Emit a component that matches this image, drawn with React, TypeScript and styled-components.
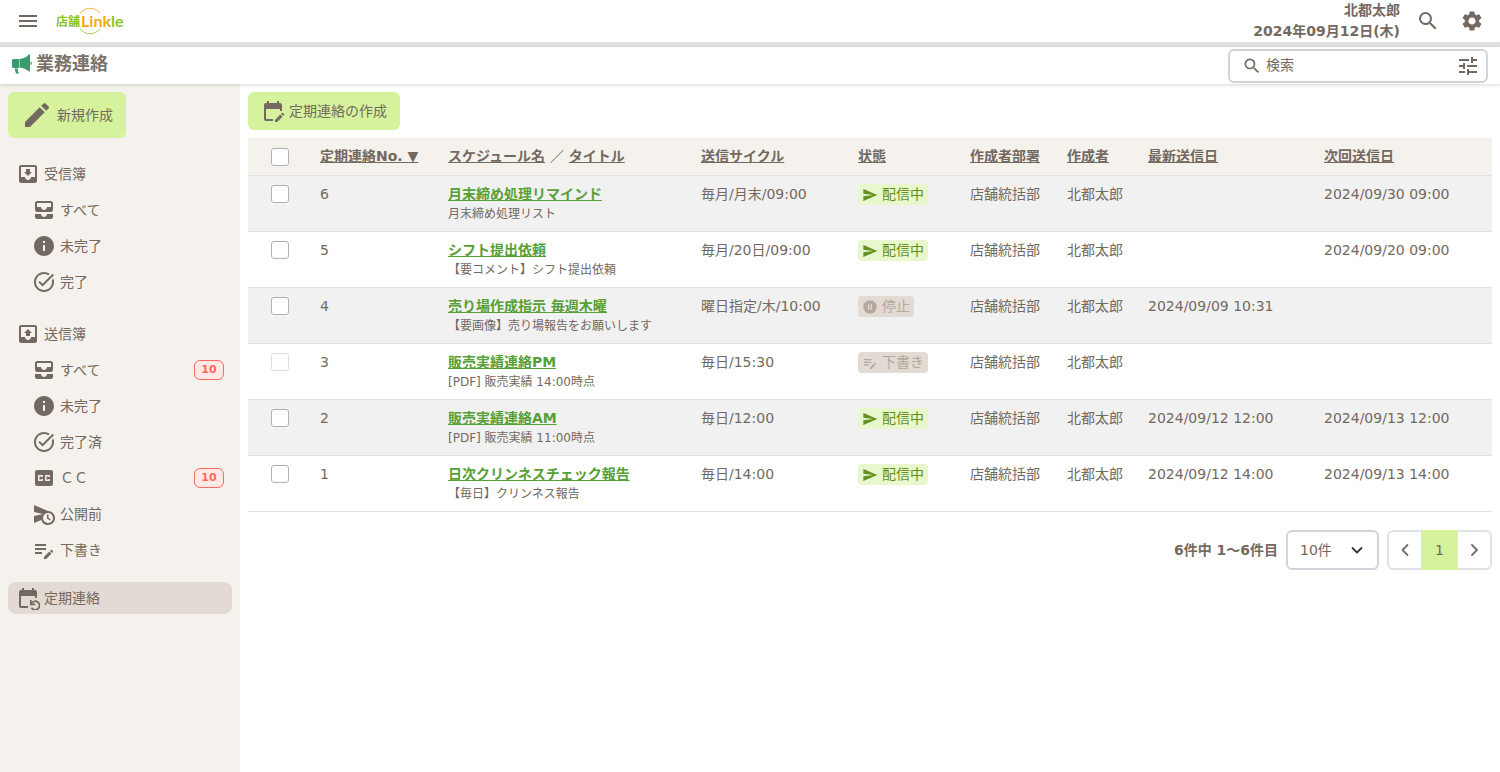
import React, { useState } from "react";
import styled, { createGlobalStyle, css } from "styled-components";
import {
  MdAllInbox,
  MdClosedCaption,
  MdEdit,
  MdEditCalendar,
  MdEditNote,
  MdInfo,
  MdMenu,
  MdPauseCircleFilled,
  MdScheduleSend,
  MdSearch,
  MdSend,
  MdSettings,
  MdTaskAlt,
  MdTune,
} from "react-icons/md";

const color = {
  text: "#736960",
  green: "#d6f29c",
  link: "#56a036",
  sand: "#f5f2ed",
  line: "#dee2e6",
  active: "#e2dad3",
};

const GlobalStyle = createGlobalStyle`
  *, *::before, *::after { box-sizing: border-box; }
  body {
    margin: 0;
    background: #fff;
    color: ${color.text};
    font-family: "DejaVu Sans", "Noto Sans CJK JP", sans-serif;
    font-size: 14px;
    line-height: 21px;
  }
  button, input, select { font: inherit; color: inherit; }
  a { color: inherit; }
`;

const Page = styled.div`
  display: flex;
  flex-direction: column;
  min-height: 100vh;
`;

const TopBar = styled.header`
  display: flex;
  align-items: center;
  height: 47px;
  padding: 0 16px;
  border-bottom: 5px solid #e0e0e0;
`;

const IconButton = styled.button`
  display: flex;
  padding: 0;
  border: 0;
  background: none;
  cursor: pointer;
  svg {
    width: 24px;
    height: 24px;
  }
`;

const LogoLink = styled.a`
  display: flex;
  margin-left: 14px;
`;

const UserInfo = styled.div`
  margin: 0 16px 0 auto;
  text-align: right;
  font-weight: 700;
`;

const TopActions = styled.div`
  display: flex;
  gap: 20px;
`;

const TitleBar = styled.div`
  position: relative;
  display: flex;
  align-items: center;
  justify-content: space-between;
  height: 37px;
  padding: 0 12px;
  box-shadow: 0 1px 4px rgba(0, 0, 0, 0.16);
`;

const PageTitle = styled.h1`
  display: flex;
  align-items: center;
  gap: 4px;
  margin: 0;
  padding-bottom: 4px;
  color: #7d7269;
  font-size: 18px;
  line-height: 24px;
`;

const SearchBox = styled.label`
  display: flex;
  align-items: center;
  gap: 4px;
  width: 260px;
  height: 34px;
  padding: 0 6px 0 12px;
  border: 2px solid #ced4da;
  border-radius: 6px;
  background: #fff;
  > svg {
    flex: none;
    width: 20px;
    height: 20px;
  }
`;

const SearchInput = styled.input`
  flex: 1;
  min-width: 0;
  padding: 0;
  border: 0;
  outline: 0;
  background: none;
  &::placeholder {
    color: ${color.text};
    opacity: 1;
  }
`;

const Body = styled.div`
  display: flex;
  flex: 1;
`;

const Sidebar = styled.nav`
  flex: none;
  width: 240px;
  padding: 8px;
  background: ${color.sand};
`;

const PrimaryButton = styled.button<{ $large?: boolean }>`
  display: flex;
  align-items: center;
  gap: 4px;
  height: ${(p) => (p.$large ? 46 : 38)}px;
  padding: 0 13px;
  border: 0;
  border-radius: 6px;
  background: ${color.green};
  cursor: pointer;
  svg {
    width: ${(p) => (p.$large ? 32 : 24)}px;
    height: ${(p) => (p.$large ? 32 : 24)}px;
  }
`;

const NavGroup = styled.ul`
  margin: 18px 0 0;
  padding: 0;
  list-style: none;
  & + & {
    margin-top: 16px;
  }
  & + &:last-child {
    margin-top: 14px;
  }
`;

const NavLink = styled.a<{ $child?: boolean; $active?: boolean }>`
  display: flex;
  align-items: center;
  gap: 4px;
  height: ${(p) => (p.$active ? 32 : 36)}px;
  padding: 0 8px 0 ${(p) => (p.$child ? 24 : 8)}px;
  border-radius: 8px;
  text-decoration: none;
  ${(p) =>
    p.$active &&
    css`
      background: ${color.active};
    `}
  svg {
    flex: none;
    width: 24px;
    height: 24px;
  }
`;

const Count = styled.span`
  margin-left: auto;
  width: 30px;
  border: 1px solid #fa6b5b;
  border-radius: 6px;
  background: #ffe8e6;
  color: #fa6b5b;
  font-size: 11px;
  font-weight: 700;
  line-height: 18px;
  text-align: center;
`;

const Main = styled.main`
  flex: 1;
  min-width: 0;
  padding: 8px;
`;

const Table = styled.table`
  width: 100%;
  margin-top: 8px;
  border-collapse: separate;
  border-spacing: 0;
  table-layout: fixed;
`;

const Col = styled.col<{ $w?: number }>`
  width: ${(p) => (p.$w ? `${p.$w}px` : "auto")};
`;

const Th = styled.th`
  height: 38px;
  padding: 0 8px;
  border-bottom: 1px solid ${color.line};
  background: ${color.sand};
  text-align: left;
  white-space: nowrap;
`;

const Tr = styled.tr`
  &:nth-child(odd) {
    background: #f1f1f1;
  }
`;

const Td = styled.td`
  padding: 8px;
  border-bottom: 1px solid ${color.line};
  vertical-align: top;
  white-space: nowrap;
`;

const SortButton = styled.button`
  padding: 0;
  border: 0;
  background: none;
  font-weight: 700;
  text-decoration: underline;
  cursor: pointer;
`;

const Checkbox = styled.input`
  appearance: none;
  display: block;
  width: 18px;
  height: 18px;
  margin: 1px auto 0;
  border: 1px solid #b1b1b1;
  border-radius: 3px;
  background: #fff;
  &:checked {
    background: ${color.link};
  }
  &:disabled {
    border-color: #dedede;
  }
  ${Th} & {
    margin-top: 0;
  }
`;

const ScheduleLink = styled.a`
  display: block;
  width: fit-content;
  color: ${color.link};
  font-weight: 700;
`;

const Subtitle = styled.div`
  font-size: 12px;
  line-height: 18px;
`;

const StatusTag = styled.span<{ $live: boolean }>`
  display: inline-flex;
  align-items: center;
  gap: 4px;
  height: 21px;
  padding: 0 4px;
  border-radius: 4px;
  vertical-align: top;
  background: ${(p) => (p.$live ? "#e8f8cc" : color.active)};
  color: ${(p) => (p.$live ? "#648f22" : "#b3a99e")};
  svg {
    width: 16px;
    height: 16px;
  }
`;

const Pager = styled.div`
  display: flex;
  align-items: center;
  justify-content: flex-end;
  gap: 8px;
  margin-top: 18px;
`;

const Total = styled.span`
  font-weight: 700;
`;

const SelectWrap = styled.div`
  display: grid;
  align-items: center;
  > * {
    grid-area: 1 / 1;
  }
  svg {
    justify-self: end;
    margin-right: 15px;
    pointer-events: none;
  }
`;

const PageSize = styled.select`
  appearance: none;
  width: 93px;
  height: 40px;
  padding: 0 12px;
  border: 2px solid #ced4da;
  border-radius: 6px;
  background: #fff;
`;

const PageNav = styled.nav`
  display: flex;
  border: 2px solid ${color.line};
  border-radius: 6px;
`;

const PageButton = styled.button<{ $current?: boolean }>`
  display: flex;
  align-items: center;
  justify-content: center;
  width: ${(p) => (p.$current ? 37 : 32)}px;
  height: ${(p) => (p.$current ? 40 : 36)}px;
  margin: ${(p) => (p.$current ? "-2px 0" : "0")};
  padding: 0;
  border: 0;
  background: ${(p) => (p.$current ? color.green : "none")};
  cursor: pointer;
`;

const Logo = () => (
  <svg width="76" height="30" viewBox="0 0 76 30" role="img" aria-label="店舗Linkle">
    <defs>
      <linearGradient id="brand" gradientUnits="userSpaceOnUse" x1="27" x2="71" y1="0" y2="0">
        <stop offset="0.55" stopColor="#f8a912" />
        <stop offset="0.72" stopColor="#8cc51f" />
      </linearGradient>
    </defs>
    <path d="M26 7A13 13 0 0 1 46 7" fill="none" stroke="#f8b540" strokeWidth="1" />
    <path d="M26 23A13 13 0 0 0 46 23" fill="none" stroke="#a3cf4a" strokeWidth="1" />
    <text x="2" y="20" fontFamily="Noto Sans CJK JP, sans-serif" fontWeight="700" fontSize="12" fill="#8cc51f">
      店舗
    </text>
    <text x="27" y="21" fontFamily="Lato, sans-serif" fontWeight="700" fontSize="16" fill="url(#brand)">
      Linkle
    </text>
  </svg>
);

const Megaphone = () => (
  <svg width="20" height="20" viewBox="0 0 20 20" fill="#389b6b" aria-hidden="true">
    <path d="M0 6.500q0-1.500 1.500-1.500H7v9H1.500Q0 14 0 12.500zM7.500 5Q13 4.500 17 .5h1v17h-1Q13 14 7.500 13.500zM18.500 7.500a1.800 1.800 0 0 1 0 3.500zM2.500 14.500H6V16h-.5l1.500 3.500H4z" />
  </svg>
);

const Tray = ({ arrow }: { arrow: "down" | "up" }) => (
  <svg viewBox="0 0 24 24" fill="currentColor" aria-hidden="true">
    <path d="M19 3H5c-1.100 0-2 .9-2 2v14c0 1.100.9 2 2 2h14c1.100 0 2-.9 2-2V5c0-1.100-.9-2-2-2zm0 12h-4c0 1.660-1.350 3-3 3s-3-1.340-3-3H5V5h14v10z" />
    <path d={arrow === "down" ? "M16 10h-2V7h-4v3H8l4 4 4-4z" : "M8 11h2v3h4v-3h2l-4-4-4 4z"} />
  </svg>
);

const CalendarRestore = () => (
  <svg viewBox="0 0 24 24" fill="currentColor" aria-hidden="true">
    <path d="M5 10h14v2h2V6c0-1.100-.9-2-2-2h-1V2h-2v2H8V2H6v2H5c-1.110 0-1.990.9-1.990 2L3 20a2 2 0 0 0 2 2h7v-2H5V10z" />
    <path d="M14.800 14v4.400h4.400M15.200 18a4.300 4.300 0 1 1 .3 3.700" fill="none" stroke="currentColor" strokeWidth="1.7" />
  </svg>
);

const Chevron = ({ d, stroke }: { d: string; stroke: string }) => (
  <svg width="14" height="14" viewBox="0 0 14 14" fill="none" stroke={stroke} strokeWidth="1.8" strokeLinecap="round" strokeLinejoin="round" aria-hidden="true">
    <path d={d} />
  </svg>
);

type NavItem = { label: string; icon: React.ReactNode; count?: number };

const navGroups: { head: NavItem; items: NavItem[] }[] = [
  {
    head: { label: "受信簿", icon: <Tray arrow="down" /> },
    items: [
      { label: "すべて", icon: <MdAllInbox /> },
      { label: "未完了", icon: <MdInfo /> },
      { label: "完了", icon: <MdTaskAlt /> },
    ],
  },
  {
    head: { label: "送信簿", icon: <Tray arrow="up" /> },
    items: [
      { label: "すべて", icon: <MdAllInbox />, count: 10 },
      { label: "未完了", icon: <MdInfo /> },
      { label: "完了済", icon: <MdTaskAlt /> },
      { label: "ＣＣ", icon: <MdClosedCaption />, count: 10 },
      { label: "公開前", icon: <MdScheduleSend /> },
      { label: "下書き", icon: <MdEditNote /> },
    ],
  },
];

type Status = "配信中" | "停止" | "下書き";

const statusIcon: Record<Status, React.ReactNode> = {
  配信中: <MdSend />,
  停止: <MdPauseCircleFilled />,
  下書き: <MdEditNote />,
};

type Schedule = {
  no: number;
  name: string;
  title: string;
  cycle: string;
  status: Status;
  last: string;
  next: string;
};

const schedules: Schedule[] = [
  { no: 6, name: "月末締め処理リマインド", title: "月末締め処理リスト", cycle: "毎月/月末/09:00", status: "配信中", last: "", next: "2024/09/30 09:00" },
  { no: 5, name: "シフト提出依頼", title: "【要コメント】シフト提出依頼", cycle: "毎月/20日/09:00", status: "配信中", last: "", next: "2024/09/20 09:00" },
  { no: 4, name: "売り場作成指示 毎週木曜", title: "【要画像】売り場報告をお願いします", cycle: "曜日指定/木/10:00", status: "停止", last: "2024/09/09 10:31", next: "" },
  { no: 3, name: "販売実績連絡PM", title: "[PDF] 販売実績 14:00時点", cycle: "毎日/15:30", status: "下書き", last: "", next: "" },
  { no: 2, name: "販売実績連絡AM", title: "[PDF] 販売実績 11:00時点", cycle: "毎日/12:00", status: "配信中", last: "2024/09/12 12:00", next: "2024/09/13 12:00" },
  { no: 1, name: "日次クリンネスチェック報告", title: "【毎日】クリンネス報告", cycle: "毎日/14:00", status: "配信中", last: "2024/09/12 14:00", next: "2024/09/13 14:00" },
];

const NavEntry = ({ item, child }: { item: NavItem; child?: boolean }) => (
  <li>
    <NavLink href="#" $child={child}>
      {item.icon}
      {item.label}
      {item.count !== undefined && <Count>{item.count}</Count>}
    </NavLink>
  </li>
);

export default function App() {
  const [query, setQuery] = useState("");

  return (
    <Page>
      <GlobalStyle />
      <TopBar>
        <IconButton aria-label="メニュー">
          <MdMenu />
        </IconButton>
        <LogoLink href="#">
          <Logo />
        </LogoLink>
        <UserInfo>
          <div>北都太郎</div>
          <div>2024年09月12日(木)</div>
        </UserInfo>
        <TopActions>
          <IconButton aria-label="検索">
            <MdSearch />
          </IconButton>
          <IconButton aria-label="設定">
            <MdSettings />
          </IconButton>
        </TopActions>
      </TopBar>
      <TitleBar>
        <PageTitle>
          <Megaphone />
          業務連絡
        </PageTitle>
        <SearchBox>
          <MdSearch />
          <SearchInput
            type="text"
            aria-label="検索"
            placeholder="検索"
            value={query}
            onChange={(e) => setQuery(e.target.value)}
          />
          <IconButton type="button" aria-label="絞り込み">
            <MdTune />
          </IconButton>
        </SearchBox>
      </TitleBar>
      <Body>
        <Sidebar>
          <PrimaryButton $large>
            <MdEdit />
            新規作成
          </PrimaryButton>
          {navGroups.map((group) => (
            <NavGroup key={group.head.label}>
              <NavEntry item={group.head} />
              {group.items.map((item) => (
                <NavEntry key={item.label} item={item} child />
              ))}
            </NavGroup>
          ))}
          <NavGroup>
            <li>
              <NavLink href="#" $active aria-current="page">
                <CalendarRestore />
                定期連絡
              </NavLink>
            </li>
          </NavGroup>
        </Sidebar>
        <Main>
          <PrimaryButton>
            <MdEditCalendar />
            定期連絡の作成
          </PrimaryButton>
          <Table>
            <colgroup>
              <Col $w={64} />
              <Col $w={128} />
              <Col />
              <Col $w={157} />
              <Col $w={112} />
              <Col $w={97} />
              <Col $w={81} />
              <Col $w={176} />
              <Col $w={176} />
            </colgroup>
            <thead>
              <tr>
                <Th>
                  <Checkbox type="checkbox" aria-label="すべて選択" />
                </Th>
                <Th><SortButton>定期連絡No. ▼</SortButton></Th>
                <Th>
                  <SortButton>スケジュール名</SortButton> ／ <SortButton>タイトル</SortButton>
                </Th>
                <Th><SortButton>送信サイクル</SortButton></Th>
                <Th><SortButton>状態</SortButton></Th>
                <Th><SortButton>作成者部署</SortButton></Th>
                <Th><SortButton>作成者</SortButton></Th>
                <Th><SortButton>最新送信日</SortButton></Th>
                <Th><SortButton>次回送信日</SortButton></Th>
              </tr>
            </thead>
            <tbody>
              {schedules.map((s) => (
                <Tr key={s.no}>
                  <Td>
                    <Checkbox type="checkbox" aria-label={`${s.name}を選択`} disabled={s.status === "下書き"} />
                  </Td>
                  <Td>{s.no}</Td>
                  <Td>
                    <ScheduleLink href="#">{s.name}</ScheduleLink>
                    <Subtitle>{s.title}</Subtitle>
                  </Td>
                  <Td>{s.cycle}</Td>
                  <Td>
                    <StatusTag $live={s.status === "配信中"}>
                      {statusIcon[s.status]}
                      {s.status}
                    </StatusTag>
                  </Td>
                  <Td>店舗統括部</Td>
                  <Td>北都太郎</Td>
                  <Td>{s.last}</Td>
                  <Td>{s.next}</Td>
                </Tr>
              ))}
            </tbody>
          </Table>
          <Pager>
            <Total>6件中 1～6件目</Total>
            <SelectWrap>
              <PageSize aria-label="表示件数" defaultValue="10">
                <option value="10">10件</option>
                <option value="20">20件</option>
                <option value="50">50件</option>
              </PageSize>
              <Chevron d="M2.500 5 7 9.500 11.500 5" stroke="#343a40" />
            </SelectWrap>
            <PageNav aria-label="ページ">
              <PageButton aria-label="前のページ">
                <Chevron d="M9.500 2l-5 5 5 5" stroke="#67707c" />
              </PageButton>
              <PageButton $current aria-current="page">1</PageButton>
              <PageButton aria-label="次のページ">
                <Chevron d="M5 2l5 5-5 5" stroke="#67707c" />
              </PageButton>
            </PageNav>
          </Pager>
        </Main>
      </Body>
    </Page>
  );
}
